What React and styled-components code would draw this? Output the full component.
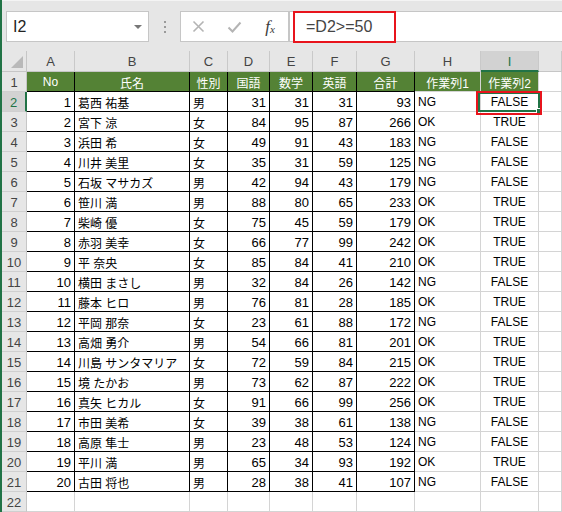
import { Fragment } from "react";
import styled, { createGlobalStyle } from "styled-components";

const GREEN = "#217346";
const GRID = "#d4d4d4";

const GlobalStyle = createGlobalStyle`
  html, body {
    margin: 0;
    padding: 0;
    background: #ffffff;
    overflow: hidden;
  }
  body {
    font-family: "Liberation Sans", "Noto Sans CJK JP", sans-serif;
  }
`;

const students = [
  [1, "葛西 祐基", "男", 31, 31, 31],
  [2, "宮下 涼", "女", 84, 95, 87],
  [3, "浜田 希", "女", 49, 91, 43],
  [4, "川井 美里", "女", 35, 31, 59],
  [5, "石坂 マサカズ", "男", 42, 94, 43],
  [6, "笹川 満", "男", 88, 80, 65],
  [7, "柴崎 優", "女", 75, 45, 59],
  [8, "赤羽 美幸", "女", 66, 77, 99],
  [9, "平 奈央", "女", 85, 84, 41],
  [10, "横田 まさし", "男", 32, 84, 26],
  [11, "藤本 ヒロ", "男", 76, 81, 28],
  [12, "平岡 那奈", "女", 23, 61, 88],
  [13, "高畑 勇介", "男", 54, 66, 81],
  [14, "川島 サンタマリア", "女", 72, 59, 84],
  [15, "境 たかお", "男", 73, 62, 87],
  [16, "真矢 ヒカル", "女", 91, 66, 99],
  [17, "市田 美希", "女", 39, 38, 61],
  [18, "高原 隼士", "男", 23, 48, 53],
  [19, "平川 満", "男", 65, 34, 93],
  [20, "古田 将也", "男", 28, 38, 41],
];

const columns = ["A", "B", "C", "D", "E", "F", "G", "H", "I"];
const headings = ["No", "氏名", "性別", "国語", "数学", "英語", "合計", "作業列1", "作業列2"];

function App() {
  return (
    <>
      <GlobalStyle />
      <Page>
        <Toolbar>
          <NameBox>
            <NameText>I2</NameText>
            <DropArrow />
          </NameBox>
          <Grip>
            <Dot />
            <Dot />
            <Dot />
          </Grip>
          <FxBox>
            <FxButton>
              <svg width="13" height="13" viewBox="0 0 13 13">
                <path d="M1.5 1.5 L11.5 11.5 M11.5 1.5 L1.5 11.5" stroke="#b4b4b4" strokeWidth="1.6" fill="none" />
              </svg>
            </FxButton>
            <FxButton>
              <svg width="15" height="12" viewBox="0 0 15 12">
                <path d="M1.5 6.5 L5.5 10.5 L13.5 1.5" stroke="#b4b4b4" strokeWidth="2" fill="none" />
              </svg>
            </FxButton>
            <FxButton>
              <FxLabel>
                f<sub>x</sub>
              </FxLabel>
            </FxButton>
          </FxBox>
          <FormulaBox>
            <FormulaText>=D2&gt;=50</FormulaText>
            <Callout $top="-1px" $left="3px" $width="103px" $height="32px" />
          </FormulaBox>
        </Toolbar>

        <Sheet>
          <Corner>
            <Triangle />
          </Corner>
          {columns.map((c) => (
            <ColHead key={c} $selected={c === "I"}>
              {c}
            </ColHead>
          ))}
          <ColHead />

          <RowHead>1</RowHead>
          {headings.map((h, i) => (
            <Cell key={h} $head $boxed={i < 7} $align="center" $small>
              {h}
            </Cell>
          ))}
          <Cell />

          {students.map(([no, name, sex, ja, ma, en], i) => {
            const row = i + 2;
            const pass = ja >= 50;
            return (
              <Fragment key={no}>
                <RowHead $selected={row === 2}>{row}</RowHead>
                <Cell $boxed $align="right">{no}</Cell>
                <Cell $boxed $small>{name}</Cell>
                <Cell $boxed $small>{sex}</Cell>
                <Cell $boxed $align="right">{ja}</Cell>
                <Cell $boxed $align="right">{ma}</Cell>
                <Cell $boxed $align="right">{en}</Cell>
                <Cell $boxed $align="right">{ja + ma + en}</Cell>
                <Cell $small>{pass ? "OK" : "NG"}</Cell>
                <Cell $align="center" $small>
                  {pass ? "TRUE" : "FALSE"}
                  {row === 2 && (
                    <>
                      <Selection>
                        <Handle />
                      </Selection>
                      <Callout $top="-1px" $left="-5px" $right="-4px" $bottom="-4px" />
                    </>
                  )}
                </Cell>
                <Cell />
              </Fragment>
            );
          })}

          <RowHead>22</RowHead>
          {columns.map((c) => (
            <Cell key={c} />
          ))}
          <Cell />
        </Sheet>
      </Page>
    </>
  );
}

const Page = styled.div`
  width: 562px;
  height: 512px;
  box-sizing: border-box;
  border-left: 2px solid ${GREEN};
  display: flex;
  flex-direction: column;
  overflow: hidden;
  background: #ffffff;
`;

const Toolbar = styled.div`
  height: 51px;
  box-sizing: border-box;
  border-top: 1px solid #f4f4f4;
  padding: 10px 0 0 4px;
  display: flex;
  align-items: flex-start;
  background: #e6e6e6;
`;

const NameBox = styled.div`
  width: 143px;
  height: 31px;
  box-sizing: border-box;
  border: 1px solid #c6c6c6;
  background: #ffffff;
  display: flex;
  align-items: center;
  justify-content: space-between;
  padding: 0 6px 0 6px;
`;

const NameText = styled.span`
  font-size: 16px;
  color: #222222;
`;

const DropArrow = styled.span`
  width: 0;
  height: 0;
  border-left: 4px solid transparent;
  border-right: 4px solid transparent;
  border-top: 4px solid #777777;
`;

const Grip = styled.div`
  width: 31px;
  height: 31px;
  display: flex;
  flex-direction: column;
  align-items: center;
  justify-content: center;
  gap: 3px;
`;

const Dot = styled.span`
  width: 2px;
  height: 2px;
  background: #9a9a9a;
`;

const FxBox = styled.div`
  width: 109px;
  height: 31px;
  box-sizing: border-box;
  border: 1px solid #c6c6c6;
  background: #ffffff;
  display: flex;
  align-items: center;
`;

const FxButton = styled.div`
  width: 36px;
  display: flex;
  align-items: center;
  justify-content: center;
`;

const FxLabel = styled.span`
  font-family: "Liberation Serif", serif;
  font-style: italic;
  font-size: 17px;
  color: #3a3a3a;
  sub {
    font-size: 11px;
    vertical-align: -1px;
  }
`;

const FormulaBox = styled.div`
  position: relative;
  flex: 1;
  height: 31px;
  box-sizing: border-box;
  border: 1px solid #c6c6c6;
  border-right: none;
  background: #ffffff;
  display: flex;
  align-items: center;
  padding-left: 16px;
`;

const FormulaText = styled.span`
  font-size: 16px;
  color: #444444;
`;

const Callout = styled.div`
  position: absolute;
  top: ${(p) => p.$top || "auto"};
  left: ${(p) => p.$left || "auto"};
  right: ${(p) => p.$right || "auto"};
  bottom: ${(p) => p.$bottom || "auto"};
  width: ${(p) => p.$width || "auto"};
  height: ${(p) => p.$height || "auto"};
  box-sizing: border-box;
  border: 2px solid #e8141c;
  z-index: 6;
  pointer-events: none;
`;

const Sheet = styled.div`
  display: grid;
  grid-template-columns: 25px 48px 115px 38px 42px 43px 44px 58px 66px 58px 1fr;
  grid-template-rows: 21px;
  grid-auto-rows: 20px;
  font-size: 13px;
`;

const Corner = styled.div`
  background: #e6e6e6;
  box-sizing: border-box;
  border-right: 1px solid #c6c6c6;
  border-bottom: 1px solid #c6c6c6;
  display: flex;
  align-items: flex-end;
  justify-content: flex-end;
  padding: 0 3px 3px 0;
`;

const Triangle = styled.span`
  width: 0;
  height: 0;
  border-left: 12px solid transparent;
  border-bottom: 12px solid #b9b9b9;
`;

const ColHead = styled.div`
  box-sizing: border-box;
  background: ${(p) => (p.$selected ? "#d2d2d2" : "#e6e6e6")};
  border-right: 1px solid #c9c9c9;
  border-bottom: ${(p) => (p.$selected ? `2px solid ${GREEN}` : "1px solid #c6c6c6")};
  color: ${(p) => (p.$selected ? GREEN : "#444444")};
  display: flex;
  align-items: center;
  justify-content: center;
  padding-top: 1px;
  font-size: 13px;
`;

const RowHead = styled.div`
  box-sizing: border-box;
  background: ${(p) => (p.$selected ? "#d2d2d2" : "#e6e6e6")};
  border-right: ${(p) => (p.$selected ? `2px solid ${GREEN}` : "1px solid #c6c6c6")};
  border-bottom: 1px solid #cfcfcf;
  color: ${(p) => (p.$selected ? GREEN : "#444444")};
  display: flex;
  align-items: center;
  justify-content: center;
  padding-top: 1px;
  font-size: 13px;
`;

const Cell = styled.div`
  position: relative;
  box-sizing: border-box;
  display: flex;
  align-items: center;
  justify-content: ${(p) =>
    p.$align === "right" ? "flex-end" : p.$align === "center" ? "center" : "flex-start"};
  padding: 1px 3px 0;
  white-space: nowrap;
  border-right: 1px solid ${(p) => (p.$boxed ? "#000000" : GRID)};
  border-bottom: 1px solid ${(p) => (p.$boxed ? "#000000" : GRID)};
  background: ${(p) => (p.$head ? "#548235" : "#ffffff")};
  color: ${(p) => (p.$head ? "#ffffff" : "#000000")};
  font-size: ${(p) => (p.$small ? "12px" : "13px")};
`;

const Selection = styled.div`
  position: absolute;
  top: 0;
  left: -3px;
  right: -2px;
  bottom: -1px;
  border: 2px solid ${GREEN};
  z-index: 5;
  pointer-events: none;
`;

const Handle = styled.span`
  position: absolute;
  right: -5px;
  bottom: -5px;
  width: 5px;
  height: 5px;
  background: ${GREEN};
  border: 1px solid #ffffff;
`;

export default App;
